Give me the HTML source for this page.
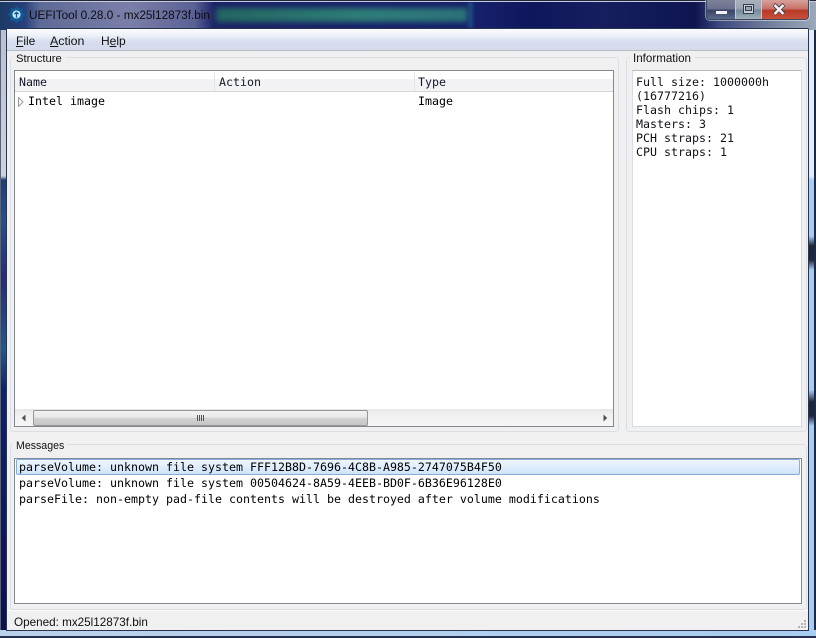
<!DOCTYPE html>
<html><head><meta charset="utf-8">
<style>
html,body{margin:0;padding:0;width:816px;height:638px;overflow:hidden;background:#fff}
div,span{position:absolute;box-sizing:border-box}
u{text-decoration:underline}
#r{left:0;top:0;width:816px;height:638px;overflow:hidden;background:#12195a}
.s{font-family:"Liberation Sans",sans-serif;font-size:11.3px;color:#111;white-space:pre;line-height:15px}
.m{font-family:"DejaVu Sans Mono","Liberation Mono",monospace;font-size:11.63px;color:#000;white-space:pre;line-height:14px}
.g{border:1px solid #dadfe6;border-radius:3px}
.l{background:#f0f0f0;padding:0 3px}
</style></head><body>
<div id="r">
<!-- title background -->
<div style="left:0;top:0;width:816px;height:30px;background:linear-gradient(90deg,#1c3a66 0,#26407a 24px,#5d6a96 40px,#7a7fa8 130px,#5a6094 195px,#1c2368 214px,#16206a 480px,#0f175c 530px,#161e60 600px,#0e1550 695px,#3e4a80 720px,#7c8aa4 780px,#9aa8b8 816px)"></div>
<div style="left:216px;top:8px;width:252px;height:14px;background:linear-gradient(90deg,#236660,#2e7e78 60%,#2b7278 98%);filter:blur(3px)"></div>
<div style="left:468px;top:2px;width:5px;height:26px;background:#1d4a80;filter:blur(1.5px)"></div>
<div style="left:0;top:1px;width:816px;height:1px;background:#c9ccd8"></div>
<div style="left:0;top:0;width:816px;height:1px;background:#20283e"></div>
<!-- left edge -->
<div style="left:0;top:30px;width:7px;height:608px;background:linear-gradient(180deg,#b9c0d0 0,#cdd3de 146px,#1a3f78 150px,#26508a 190px,#2a2a78 250px,#1e5a88 320px,#10206a 360px,#0b1056 600px)"></div>
<div style="left:0;top:30px;width:1px;height:600px;background:#5a6478"></div>
<!-- right edge -->
<div style="left:808px;top:30px;width:8px;height:608px;background:linear-gradient(180deg,#e4edf6 0,#e4edf6 146px,#a9cdf0 150px,#a9cdf0 206px,#1e2630 216px,#20283a 230px,#a9cdf0 240px,#a9cdf0 360px,#1e2630 372px,#20283a 386px,#a9cdf0 396px,#a9cdf0 608px)"></div>
<div style="left:814px;top:30px;width:2px;height:608px;background:#1c2a4a"></div>
<!-- bottom edge -->
<div style="left:0;top:630px;width:816px;height:8px;background:linear-gradient(90deg,#bcd2ea 0,#a9cdf0 100%)"></div>
<div style="left:0;top:636px;width:816px;height:2px;background:#25304e"></div>
<!-- client -->
<div style="left:6px;top:28px;width:803px;height:603px;border:1px solid #2a3350;border-radius:2px 2px 0 0;background:#f0f0f0"></div>
<!-- title icon -->
<svg style="position:absolute;left:8px;top:6px" width="17" height="17" viewBox="0 0 16 16">
<circle cx="8" cy="8" r="6.4" fill="#0f5c96"/>
<path d="M8 0.4v15.2M0.4 8h15.2M2.6 2.6l10.8 10.8M13.4 2.6L2.6 13.4" stroke="#0f5c96" stroke-width="2.2"/>
<circle cx="8" cy="8" r="3.8" fill="#d6e8f4"/>
<path d="M8 6v5M6 7.6L8 6l2 1.6" stroke="#0f5c96" stroke-width="1.3" fill="none"/>
</svg>
<div class="s" style="left:29px;top:8px;color:#0d0d14;font-size:11.75px">UEFITool 0.28.0 - mx25l12873f.bin</div>
<!-- window buttons -->
<div style="left:706px;top:0;width:103px;height:20px;border:1px solid #3c465c;border-top:0;border-radius:0 0 4px 4px;overflow:hidden;box-shadow:0 0 0 1px rgba(255,255,255,.45)">
 <div style="left:0;top:0;width:29px;height:19px;background:linear-gradient(180deg,#7c8099 0,#6d7290 45%,#3a4268 55%,#5a6a8c 100%);border-right:1px solid #c0c8d4"></div>
 <div style="left:29px;top:0;width:26px;height:19px;background:linear-gradient(180deg,#a8b0bc 0,#9aa4b2 45%,#76889c 55%,#a0b0bc 100%);border-right:1px solid #c0c8d4"></div>
 <div style="left:55px;top:0;width:48px;height:19px;background:linear-gradient(180deg,#d8a09a 0,#c8746a 45%,#b83a26 55%,#c8503c 100%)"></div>
 <div style="left:9px;top:11px;width:11px;height:3px;background:#f0f2f6;border:0"></div>
 <div style="left:36px;top:4px;width:11px;height:10px;border:1px solid #333d52;background:#c6ced8"></div>
 <div style="left:38px;top:6px;width:7px;height:5px;border:1px solid #333d52;background:#9aa6b4"></div>
</div>
<svg style="position:absolute;left:772px;top:3px" width="14" height="13" viewBox="0 0 14 13"><path d="M2 1.5l10 9.5M12 1.5L2 11" stroke="#3a3a48" stroke-width="4"/><path d="M2.5 2l9 9M11.5 2l-9 9" stroke="#f4f4f6" stroke-width="2.6"/></svg>
<!-- menu -->
<div style="left:7px;top:29px;width:801px;height:22px;background:linear-gradient(180deg,#fbfcfe 0,#f0f3fa 25%,#d8deee 60%,#d4dbec 100%);border-bottom:1px solid #b8bec8"></div>
<div class="s" style="left:16px;top:34px;font-size:12px"><u>F</u>ile</div>
<div class="s" style="left:50px;top:34px;font-size:12.4px"><u>A</u>ction</div>
<div class="s" style="left:101px;top:34px;font-size:12px">H<u>e</u>lp</div>
<!-- Structure group -->
<div class="g" style="left:10px;top:57px;width:609px;height:375px"></div>
<div class="s l" style="left:13px;top:52px;height:15px">Structure</div>
<div style="left:14px;top:70px;width:600px;height:357px;border:1px solid #828790;background:#fff"></div>
<div style="left:15px;top:71px;width:598px;height:21px;background:linear-gradient(180deg,#fff 0,#fff 40%,#f1f2f4 42%,#f3f3f5 100%);border-bottom:1px solid #d5d5d5"></div>
<div style="left:214px;top:72px;width:1px;height:19px;background:#e3e4e6"></div>
<div style="left:414px;top:72px;width:1px;height:19px;background:#e3e4e6"></div>
<div class="m" style="left:19px;top:75px;color:#16182a">Name</div>
<div class="m" style="left:219px;top:75px;color:#16182a">Action</div>
<div class="m" style="left:418px;top:75px;color:#16182a">Type</div>
<svg style="position:absolute;left:18px;top:97px" width="6" height="10" viewBox="0 0 6 10"><path d="M0.5 0.5L5 5 0.5 9.5z" fill="#fff" stroke="#9a9a9a"/></svg>
<div class="m" style="left:28px;top:94px">Intel image</div>
<div class="m" style="left:418px;top:94px">Image</div>
<!-- scrollbar -->
<div style="left:15px;top:409px;width:598px;height:17px;background:linear-gradient(180deg,#e6e6e6 0,#f0f0f0 30%,#f6f6f6 100%)"></div>
<div style="left:33px;top:410px;width:335px;height:16px;border:1px solid #979797;border-radius:2px;background:linear-gradient(180deg,#f2f2f2 0,#e8e8e8 45%,#d2d2d2 52%,#c6c6c6 100%)"></div>
<div style="left:197px;top:415px;width:1px;height:6px;background:#555"></div>
<div style="left:199px;top:415px;width:1px;height:6px;background:#555"></div>
<div style="left:201px;top:415px;width:1px;height:6px;background:#555"></div>
<div style="left:203px;top:415px;width:1px;height:6px;background:#555"></div>
<svg style="position:absolute;left:21px;top:414px" width="5" height="8" viewBox="0 0 5 8"><path d="M4.5 0.5L0.8 4 4.5 7.5z" fill="#505050"/></svg>
<svg style="position:absolute;left:603px;top:414px" width="5" height="8" viewBox="0 0 5 8"><path d="M0.5 0.5L4.2 4 0.5 7.5z" fill="#505050"/></svg>
<!-- Information group -->
<div class="g" style="left:626px;top:57px;width:181px;height:375px"></div>
<div class="s l" style="left:630px;top:51px;height:15px;font-size:11.6px">Information</div>
<div style="left:632px;top:70px;width:170px;height:357px;border:1px solid #d9dde2;border-top-color:#b8bcc2;background:#fff"></div>
<div class="m" style="left:636px;top:75px;line-height:14px;color:#101018">Full size: 1000000h
(16777216)
Flash chips: 1
Masters: 3
PCH straps: 21
CPU straps: 1</div>
<!-- Messages group -->
<div class="g" style="left:10px;top:444px;width:797px;height:166px"></div>
<div class="s l" style="left:13px;top:439px;height:15px;font-size:10.6px">Messages</div>
<div style="left:14px;top:458px;width:788px;height:146px;border:1px solid #828790;background:#fff"></div>
<div style="left:16px;top:459px;width:784px;height:16px;border:1px solid #84acdd;border-radius:2px;background:linear-gradient(180deg,#eff6fe 0,#cfe4fb 100%)"></div>
<div class="m" style="left:19px;top:460px">parseVolume: unknown file system FFF12B8D-7696-4C8B-A985-2747075B4F50</div>
<div class="m" style="left:19px;top:476px">parseVolume: unknown file system 00504624-8A59-4EEB-BD0F-6B36E96128E0</div>
<div class="m" style="left:19px;top:492px">parseFile: non-empty pad-file contents will be destroyed after volume modifications</div>
<!-- status -->
<div style="left:7px;top:610px;width:801px;height:1px;background:#fafafa"></div>
<div class="s" style="left:14px;top:615px;font-size:11.7px">Opened: mx25l12873f.bin</div>
<svg style="position:absolute;left:796px;top:619px" width="11" height="11" viewBox="0 0 11 11"><path d="M8 1h2v2H8zM5 4h2v2H5zM8 4h2v2H8zM2 7h2v2H2zM5 7h2v2H5zM8 7h2v2H8z" fill="#b4b4b4"/></svg>
</div>
</body></html>
